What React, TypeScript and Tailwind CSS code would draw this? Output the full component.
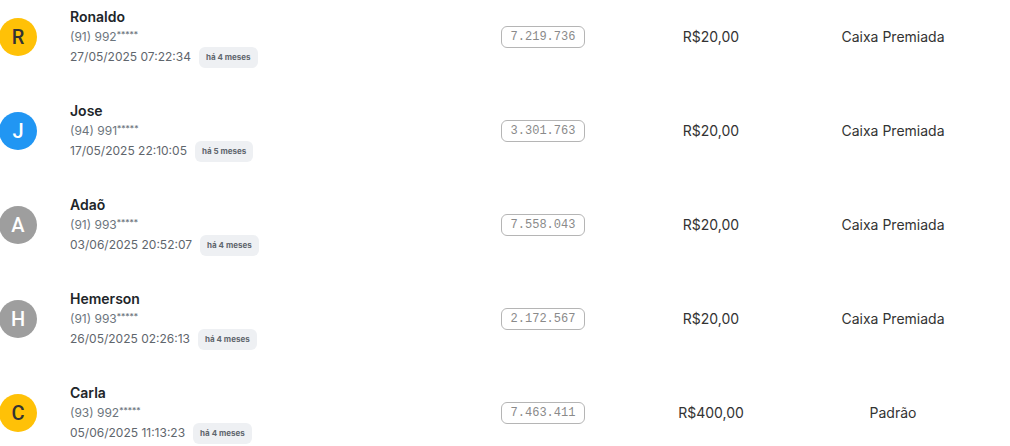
import React from 'react';

interface Entry {
  name: string;
  phone: string;
  date: string;
  ago: string;
  ticket: string;
  amount: string;
  kind: string;
  avatar: string;
}

const entries: Entry[] = [
  { name: 'Ronaldo', phone: '(91) 992', date: '27/05/2025 07:22:34', ago: 'há 4 meses', ticket: '7.219.736', amount: 'R$20,00', kind: 'Caixa Premiada', avatar: 'bg-[#ffc107] text-[#333]' },
  { name: 'Jose', phone: '(94) 991', date: '17/05/2025 22:10:05', ago: 'há 5 meses', ticket: '3.301.763', amount: 'R$20,00', kind: 'Caixa Premiada', avatar: 'bg-[#2196f3] text-white' },
  { name: 'Adaõ', phone: '(91) 993', date: '03/06/2025 20:52:07', ago: 'há 4 meses', ticket: '7.558.043', amount: 'R$20,00', kind: 'Caixa Premiada', avatar: 'bg-[#9e9e9e] text-white' },
  { name: 'Hemerson', phone: '(91) 993', date: '26/05/2025 02:26:13', ago: 'há 4 meses', ticket: '2.172.567', amount: 'R$20,00', kind: 'Caixa Premiada', avatar: 'bg-[#9e9e9e] text-white' },
  { name: 'Carla', phone: '(93) 992', date: '05/06/2025 11:13:23', ago: 'há 4 meses', ticket: '7.463.411', amount: 'R$400,00', kind: 'Padrão', avatar: 'bg-[#ffc107] text-[#333]' }
];

export default function App() {
  return (
    <div className="w-[1010px] h-[446px] overflow-hidden bg-white font-['Inter',sans-serif] text-[#212529]">
      <div className="-mt-[10px]">
        {entries.map((e, i) => (
          <div key={i} className="grid grid-cols-[460px_166px_170px_194px] h-[94px] items-center">
            {/* Player */}
            <div className="flex items-center">
              <div className={`w-[38px] h-[38px] -ml-px rounded-full flex items-center justify-center font-['Roboto',sans-serif] text-[20px] font-medium ${e.avatar}`}>
                {e.name[0]}
              </div>
              <div className="ml-[33px] flex flex-col">
                <div className="text-sm leading-5 font-semibold text-[#212529]">{e.name}</div>
                <div className="mt-[2px] text-xs leading-4 text-[#6c757d]">
                  {e.phone}
                  <span className="text-[8.5px] align-top leading-3">*****</span>
                </div>
                <div className="mt-[2px] flex items-center h-[21px] gap-2">
                  <span className="text-xs text-[#5f666d]">{e.date}</span>
                  <span className="h-[21px] px-[7px] rounded-md bg-[#eef0f3] text-[8px] font-bold text-[#5f666d] flex items-center">
                    {e.ago}
                  </span>
                </div>
              </div>
            </div>

            {/* Ticket */}
            <div className="flex justify-center">
              <span className="h-[22px] px-[9px] border border-[#b5b5b5] rounded-md flex items-center font-['Liberation_Mono',monospace] text-xs text-[#8a8a8a]">
                {e.ticket}
              </span>
            </div>

            {/* Amount */}
            <div className="text-center text-sm text-[#333]">{e.amount}</div>

            {/* Kind */}
            <div className="text-center text-sm text-[#333]">{e.kind}</div>
          </div>
        ))}
      </div>
    </div>
  );
}
